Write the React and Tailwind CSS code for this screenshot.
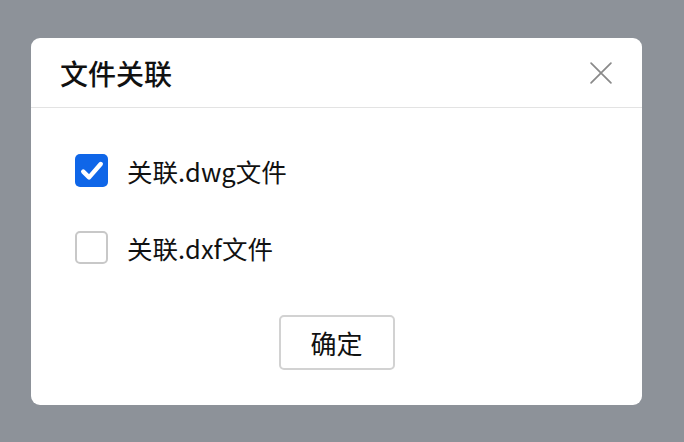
import React, { useState } from 'react';

function Checkbox({ checked, onChange }) {
  return (
    <button
      onClick={onChange}
      className={`w-[33px] h-[33px] shrink-0 rounded-[5px] flex items-center justify-center ${
        checked ? 'bg-[#0f66e8]' : 'bg-white border-2 border-[#c8c8c8]'
      }`}
    >
      {checked && (
        <svg viewBox="0 0 24 24" className="w-[28px] h-[28px]" fill="none" stroke="white" strokeWidth={3.8} strokeLinecap="round" strokeLinejoin="round">
          <path d="M4.5 12.5l5 5L19.5 6" />
        </svg>
      )}
    </button>
  );
}

export default function App() {
  const [dwg, setDwg] = useState(true);
  const [dxf, setDxf] = useState(false);

  return (
    <div
      className="w-[684px] h-[442px] bg-[#8d9299] pt-[38px] pl-[31px]"
      style={{ fontFamily: '"Noto Sans CJK SC", "Noto Sans", sans-serif' }}
    >
      <div className="w-[611px] h-[367px] bg-white rounded-[9px] flex flex-col">
        {/* Header */}
        <div className="h-[70px] flex items-center justify-between pl-[29px] pr-[27px] border-b border-[#e3e3e3]">
          <h2 className="text-[28px] font-medium text-[#111] leading-none">文件关联</h2>
          <svg viewBox="0 0 24 24" className="w-[28px] h-[28px]" fill="none" stroke="#8a8a8a" strokeWidth={1.5} strokeLinecap="round">
            <path d="M3.5 3.5l17 17M20.5 3.5l-17 17" />
          </svg>
        </div>

        {/* Options */}
        <div className="flex flex-col gap-[44px] pl-[44px] pt-[46px]">
          <label className="flex items-center gap-[19px]">
            <Checkbox checked={dwg} onChange={() => setDwg(!dwg)} />
            <span className="text-[25.5px] text-[#111] leading-none">关联.dwg文件</span>
          </label>
          <label className="flex items-center gap-[19px]">
            <Checkbox checked={dxf} onChange={() => setDxf(!dxf)} />
            <span className="text-[25.5px] text-[#111] leading-none">关联.dxf文件</span>
          </label>
        </div>

        {/* Footer */}
        <div className="flex justify-center pt-[51px]">
          <button className="w-[116px] h-[55px] rounded-[5px] border-2 border-[#d2d2d2] bg-white text-[26px] text-[#111] leading-none">
            确定
          </button>
        </div>
      </div>
    </div>
  );
}
